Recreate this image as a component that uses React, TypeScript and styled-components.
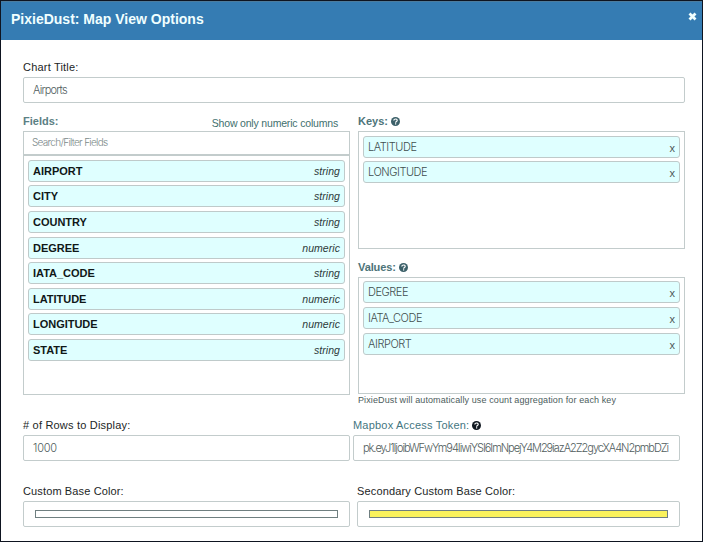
import React from "react";
import styled, { createGlobalStyle } from "styled-components";

const Global = createGlobalStyle`
  * { box-sizing: border-box; }
  body { margin: 0; background: #fff; font-family: "Liberation Sans", Arial, sans-serif; font-size: 11px; color: #1c2626; }
`;

const Dialog = styled.div`
  width: 703px;
  height: 542px;
  border: 1px solid #0e1420;
  background: #fff;
  overflow: hidden;
`;
const Header = styled.header`
  height: 39px;
  padding: 0 5px 4px 10px;
  display: flex;
  align-items: center;
  justify-content: space-between;
  background: #357cb3;
  border-top: 1px solid #4c7c9e;
  color: #f0ffff;
`;
const Title = styled.h1`
  margin: 0;
  font-size: 14px;
  line-height: 18px;
  font-weight: bold;
  white-space: nowrap;
`;
const Close = styled.button`
  display: flex;
  padding: 0;
  margin-top: -5px;
  border: 0;
  background: none;
`;
const Body = styled.main`
  padding: 19px 17px 0 22px;
`;
const Label = styled.label<{ $tone?: string; $bold?: boolean; $ls?: number }>`
  display: flex;
  align-items: center;
  gap: 3px;
  height: 17px;
  margin-bottom: 1px;
  line-height: 17px;
  font-size: 11px;
  white-space: nowrap;
  font-weight: ${(p) => (p.$bold ? "bold" : "normal")};
  color: ${(p) => p.$tone || "#1c2626"};
  letter-spacing: ${(p) => p.$ls ?? 0.2}px;
`;
const Input = styled.div<{ $ls?: number }>`
  height: 26px;
  border: 1px solid #c3cccc;
  border-radius: 2px;
  padding: 0 9px;
  line-height: 25px;
  font-family: Inter, sans-serif;
  font-weight: 300;
  font-size: 11px;
  color: #4f5c5c;
  letter-spacing: ${(p) => p.$ls ?? -0.2}px;
  white-space: nowrap;
`;
const Clip = styled.div`
  overflow: hidden;
`;
const Columns = styled.section`
  display: grid;
  grid-template-columns: 327px 327px;
  column-gap: 8px;
  margin-top: 10px;
  height: 293px;
`;
const LabelRow = styled.div`
  display: flex;
  justify-content: space-between;
  height: 18px;
`;
const NumericLink = styled.a`
  margin-right: 12px;
  padding-top: 3px;
  line-height: 15px;
  font-size: 10.5px;
  color: #3f706e;
  letter-spacing: -0.18px;
`;
const Panel = styled.div<{ $h: number; $top?: number }>`
  height: ${(p) => p.$h}px;
  border: 1px solid #c3cccc;
  padding: ${(p) => p.$top ?? 3.9}px 4px 0;
`;
const Search = styled.div`
  height: 24px;
  margin: 0 -4px 3.9px;
  padding-left: 8px;
  border-bottom: 2px solid #c3cccc;
  line-height: 21px;
  font-family: Inter, sans-serif;
  font-weight: 300;
  font-size: 10px;
  letter-spacing: -0.7px;
  color: #7a8888;
`;
const Item = styled.div`
  display: flex;
  justify-content: space-between;
  height: 22px;
  margin-bottom: 3.57px;
  padding: 0 4px;
  border: 1px solid #bfcaca;
  border-radius: 3px;
  background: #dfffff;
  line-height: 21px;
`;
const FieldName = styled.b`
  color: #101818;
  letter-spacing: -0.02px;
`;
const FieldType = styled.i`
  color: #2d3a3a;
  font-size: 10.5px;
  letter-spacing: 0.05px;
`;
const Chosen = styled.span`
  font-family: Inter, sans-serif;
  font-weight: 300;
  color: #3f4e4e;
  letter-spacing: -0.45px;
`;
const Remove = styled.span`
  font-size: 11px;
  line-height: 23px;
  color: #4c5858;
`;
const ValuesLabel = styled.div`
  margin-top: 10px;
  height: 18px;
`;
const Note = styled.p`
  margin: 0;
  line-height: 12px;
  font-size: 9px;
  color: #4c5c5c;
  white-space: nowrap;
  letter-spacing: 0.11px;
`;
const FormRow = styled.section<{ $cols: string; $gap: number; $top: number }>`
  display: grid;
  grid-template-columns: ${(p) => p.$cols};
  column-gap: ${(p) => p.$gap}px;
  margin-top: ${(p) => p.$top}px;
`;
const Group = styled.div`
  min-width: 0;
`;
const SwatchBox = styled(Input)`
  padding: 8px 11px;
`;
const Swatch = styled.div<{ $color: string }>`
  height: 8px;
  border: 1px solid #6f7f80;
  background: ${(p) => p.$color};
`;

const Help = ({ color }: { color: string }) => (
  <svg width="9" height="9" viewBox="0 0 16 16">
    <circle cx="8" cy="8" r="8" fill={color} />
    <path d="M5 6.1C5 2.7 11 2.7 11 6c0 2-2.8 2-2.8 4M8.2 11.3v2" fill="none" stroke="#fff" strokeWidth="2.1" />
  </svg>
);

const fields = [
  ["AIRPORT", "string"],
  ["CITY", "string"],
  ["COUNTRY", "string"],
  ["DEGREE", "numeric"],
  ["IATA_CODE", "string"],
  ["LATITUDE", "numeric"],
  ["LONGITUDE", "numeric"],
  ["STATE", "string"],
];

const ChosenList = ({ names }: { names: string[] }) => (
  <>
    {names.map((n) => (
      <Item key={n}>
        <Chosen>{n}</Chosen>
        <Remove>x</Remove>
      </Item>
    ))}
  </>
);

export default function App() {
  return (
    <Dialog>
      <Global />
      <Header>
        <Title>PixieDust: Map View Options</Title>
        <Close aria-label="Close">
          <svg width="9" height="9" viewBox="0 0 9 9">
            <path d="M1.5 1.5l6 6M7.5 1.5l-6 6" stroke="#f0ffff" strokeWidth="2.8" />
          </svg>
        </Close>
      </Header>
      <Body>
        <Label>Chart Title:</Label>
        <Input $ls={-0.8}>Airports</Input>
        <Columns>
          <div>
            <LabelRow>
              <Label $bold $tone="#5b8084" $ls={0}>Fields:</Label>
              <NumericLink>Show only numeric columns</NumericLink>
            </LabelRow>
            <Panel $h={264} $top={0}>
              <Search>Search/Filter Fields</Search>
              {fields.map(([name, type]) => (
                <Item key={name}>
                  <FieldName>{name}</FieldName>
                  <FieldType>{type}</FieldType>
                </Item>
              ))}
            </Panel>
          </div>
          <div>
            <LabelRow>
              <Label $bold $tone="#4d7479" $ls={0}>Keys: <Help color="#3c6069" /></Label>
            </LabelRow>
            <Panel $h={118}>
              <ChosenList names={["LATITUDE", "LONGITUDE"]} />
            </Panel>
            <ValuesLabel>
              <Label $bold $tone="#4d7479" $ls={-0.1}>Values: <Help color="#3c6069" /></Label>
            </ValuesLabel>
            <Panel $h={117} $top={3.45}>
              <ChosenList names={["DEGREE", "IATA_CODE", "AIRPORT"]} />
            </Panel>
            <Note>PixieDust will automatically use count aggregation for each key</Note>
          </div>
        </Columns>
        <FormRow $cols="327px 327px" $gap={3} $top={11}>
          <Group>
            <Label>{"# of Rows to Display:"}</Label>
            <Input>1000</Input>
          </Group>
          <Group>
            <Label $tone="#44767f">Mapbox Access Token: <Help color="#101820" /></Label>
            <Input $ls={-1.03}>
              <Clip>pk.eyJ1IjoibWFwYm94IiwiYSI6ImNpejY4M29iazA2Z2gycXA4N2pmbDZi</Clip>
            </Input>
          </Group>
        </FormRow>
        <FormRow $cols="327px 323px" $gap={7} $top={22}>
          <Group>
            <Label $ls={0.13}>Custom Base Color:</Label>
            <SwatchBox><Swatch $color="#ffffff" /></SwatchBox>
          </Group>
          <Group>
            <Label $ls={0.15}>Secondary Custom Base Color:</Label>
            <SwatchBox><Swatch $color="#faf25c" /></SwatchBox>
          </Group>
        </FormRow>
      </Body>
    </Dialog>
  );
}
